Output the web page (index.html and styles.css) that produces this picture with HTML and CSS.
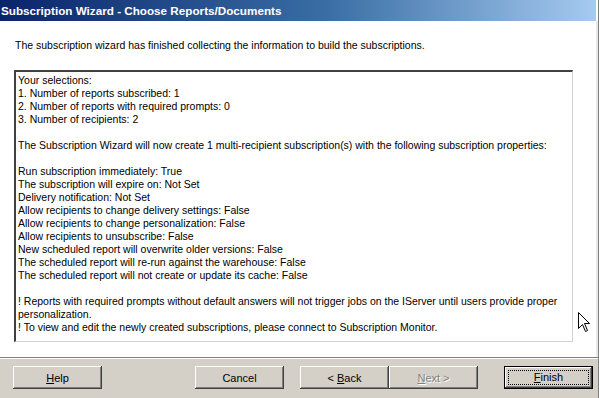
FILE: index.html
```html
<!DOCTYPE html>
<html lang="en">
<head>
    <meta charset="UTF-8">
    <title>Subscription Wizard - Choose Reports/Documents</title>
    <link rel="stylesheet" href="styles.css">
</head>
<body>
    <div class="window">
        <div class="titlebar">Subscription Wizard - Choose Reports/Documents</div>

        <div class="content">
            <p class="intro">The subscription wizard has finished collecting the information to build the subscriptions.</p>

            <div class="summary">
                <div>Your selections:</div>
                <div>1. Number of reports subscribed: 1</div>
                <div>2. Number of reports with required prompts: 0</div>
                <div>3. Number of recipients: 2</div>
                <div class="blank"></div>
                <div>The Subscription Wizard will now create 1 multi-recipient subscription(s) with the following subscription properties:</div>
                <div class="blank"></div>
                <div>Run subscription immediately: True</div>
                <div>The subscription will expire on: Not Set</div>
                <div>Delivery notification: Not Set</div>
                <div>Allow recipients to change delivery settings: False</div>
                <div>Allow recipients to change personalization: False</div>
                <div>Allow recipients to unsubscribe: False</div>
                <div>New scheduled report will overwrite older versions: False</div>
                <div>The scheduled report will re-run against the warehouse: False</div>
                <div>The scheduled report will not create or update its cache: False</div>
                <div class="blank"></div>
                <div>! Reports with required prompts without default answers will not trigger jobs on the IServer until users provide proper personalization.</div>
                <div>! To view and edit the newly created subscriptions, please connect to Subscription Monitor.</div>
            </div>
        </div>

        <div class="footer">
            <button class="button"><u>H</u>elp</button>
            <div class="spacer"></div>
            <button class="button">Cancel</button>
            <button class="button back">&lt; <u>B</u>ack</button>
            <button class="button" disabled><u>N</u>ext &gt;</button>
            <button class="button default"><span class="focus"><u>F</u>inish</span></button>
        </div>

        <!-- mouse pointer -->
        <svg class="cursor" width="13" height="21" viewBox="0 0 13 21">
            <path d="M0.5 0.5 L0.5 16.5 L4.5 12.5 L7.5 19.5 L9.5 18.5 L6.5 11.5 L11.5 11.5 Z" fill="#fff" stroke="#000" stroke-width="1"/>
        </svg>
    </div>
</body>
</html>
```

FILE: styles.css
```css
* {
    box-sizing: border-box;
    margin: 0;
    padding: 0;
}

body {
    font-family: "Liberation Sans", Arial, sans-serif;
    font-size: 10.5px;
    color: #000;
    background-color: #d4d0c8;
}

.window {
    position: relative;
    width: 599px;
    height: 398px;
    display: flex;
    flex-direction: column;
    border-right: 1px solid #808080;
    background-color: #fff;
}

.titlebar {
    height: 21px;
    padding-left: 1px;
    line-height: 21px;
    font-family: "Liberation Sans", Arial, sans-serif;
    font-weight: bold;
    font-size: 11.7px;
    color: #fff;
    background: linear-gradient(to right, #0a246a 0%, #3a6ea5 55%, #a6caf0 100%);
    margin-right: 2px;
}

.content {
    flex: 1;
    padding: 18px 23px 0 14px;
    border-right: 2px solid #e8e8e8;
}

.intro {
    padding-left: 1px;
    line-height: 13px;
}

.summary {
    margin-top: 18px;
    height: 272px;
    padding: 2px 0 0 2px;
    line-height: 13px;
    border-top: 2px solid #404040;
    border-left: 2px solid #404040;
    border-right: 1px solid #d4d0c8;
    border-bottom: 1px solid #d4d0c8;
    background-color: #fff;
}

.blank {
    height: 13px;
}

.footer {
    height: 41px;
    display: flex;
    align-items: flex-start;
    padding: 8px 0 0 13px;
    background-color: #d4d0c8;
    border-top: 1px solid #808080;
    box-shadow: inset 0 1px 0 #fff;
}

.spacer {
    width: 93px;
}

.button {
    width: 89px;
    height: 23px;
    font-family: "Liberation Sans", Arial, sans-serif;
    font-size: 11px;
    color: #000;
    background-color: #d4d0c8;
    border: none;
    box-shadow: inset -1px -1px 0 #404040, inset 1px 1px 0 #fff, inset -2px -2px 0 #808080;
}

.button.back {
    margin-left: 16px;
}

.button:disabled {
    color: #808080;
    text-shadow: 1px 1px 0 #fff;
}

.button.default {
    margin-left: 26px;
    border: 1px solid #000;
    padding: 3px;
}

.focus {
    display: block;
    height: 100%;
    line-height: 13px;
    border: 1px dotted #000;
}

.cursor {
    position: absolute;
    left: 578px;
    top: 312px;
}
```
